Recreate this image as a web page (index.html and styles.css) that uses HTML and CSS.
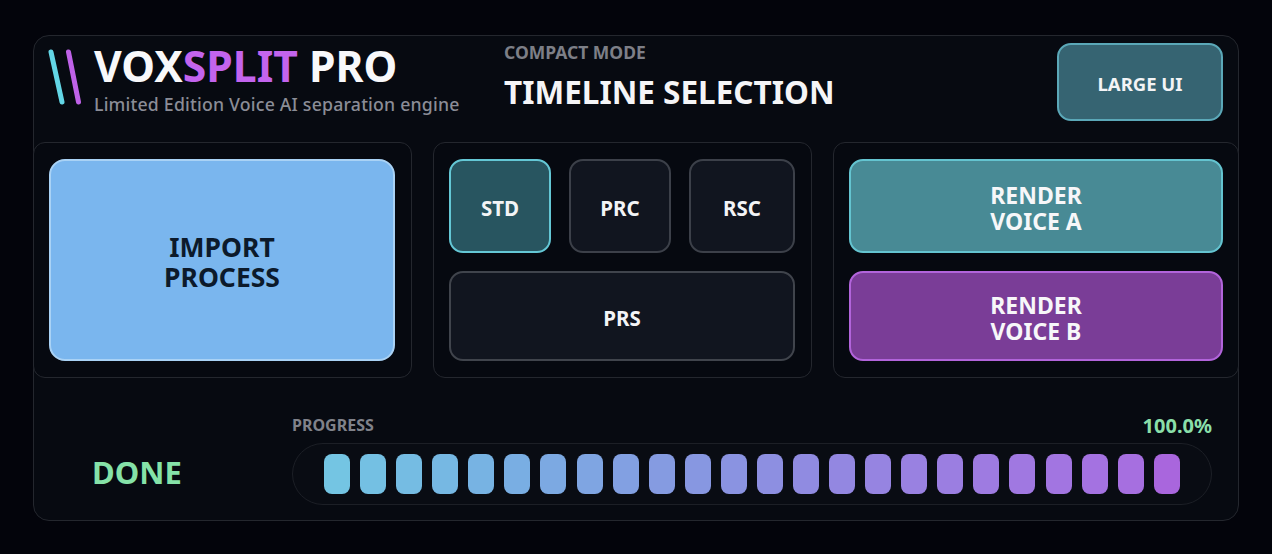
FILE: index.html
```html
<!DOCTYPE html>
<html lang="en">
<head>
<meta charset="utf-8">
<title>VoxSplit Pro</title>
<link rel="stylesheet" href="styles.css">
</head>
<body>
<main class="shell">
  <header class="top">
    <div class="brand">
      <svg class="logo" width="36" height="60" viewBox="0 0 36 60" aria-hidden="true">
        <line x1="3" y1="4" x2="14" y2="54" class="logo-a"/>
        <line x1="20.5" y1="4" x2="30.5" y2="54" class="logo-b"/>
      </svg>
      <div class="brand-text">
        <div class="title">VOX<span class="accent">SPLIT</span> PRO</div>
        <div class="subtitle">Limited Edition Voice AI separation engine</div>
      </div>
    </div>
    <div class="mode">
      <div class="mode-label">COMPACT MODE</div>
      <div class="mode-title">TIMELINE SELECTION</div>
    </div>
    <button class="btn large-ui">LARGE UI</button>
  </header>
  <section class="controls">
    <div class="card card-import">
      <button class="btn import">IMPORT<br>PROCESS</button>
    </div>
    <div class="card card-modes">
      <div class="mode-row">
        <button class="btn mode-btn std">STD</button>
        <button class="btn mode-btn prc">PRC</button>
        <button class="btn mode-btn rsc">RSC</button>
      </div>
      <button class="btn mode-btn prs">PRS</button>
    </div>
    <div class="card card-render">
      <button class="btn render voice-a">RENDER<br>VOICE A</button>
      <button class="btn render voice-b">RENDER<br>VOICE B</button>
    </div>
  </section>
  <footer class="bottom">
    <div class="status">DONE</div>
    <div class="progress">
      <div class="progress-head">
        <span class="progress-label">PROGRESS</span>
        <span class="progress-value">100.0%</span>
      </div>
      <div class="track">
        <i style="background:#74c5e3"></i><i style="background:#74c0e3"></i><i style="background:#75bce3"></i><i style="background:#76b8e3"></i>
        <i style="background:#77b3e3"></i><i style="background:#79aee3"></i><i style="background:#7ca9e2"></i><i style="background:#7fa5e2"></i>
        <i style="background:#82a0e2"></i><i style="background:#859be1"></i><i style="background:#8797e1"></i><i style="background:#8a93e1"></i>
        <i style="background:#8d8fe1"></i><i style="background:#908be1"></i><i style="background:#9387e1"></i><i style="background:#9684e1"></i>
        <i style="background:#9981e1"></i><i style="background:#9b7ee1"></i><i style="background:#9e7be1"></i><i style="background:#a078e1"></i>
        <i style="background:#a275e1"></i><i style="background:#a472e1"></i><i style="background:#a66fe0"></i><i style="background:#a966dd"></i>
      </div>
    </div>
  </footer>
</main>
</body>
</html>
```
FILE: styles.css
```css
* { box-sizing: border-box; }
html, body { margin: 0; height: 100%; }
body {
  background: #03040b;
  font-family: "Noto Sans", "DejaVu Sans", sans-serif;
  color: #f3f4f6;
  padding: 35px 33px 33px;
}
.shell {
  height: 486px;
  border: 1px solid #24272e;
  border-radius: 16px;
  background: #070a11;
  display: flex;
  flex-direction: column;
}
.top {
  height: 106px;
  display: flex;
  align-items: flex-start;
}
.brand { display: flex; margin: 12px 0 0 14px; width: 456px; }
.logo { flex: none; margin-right: 10px; }
.logo line { stroke-width: 5; stroke-linecap: round; }
.logo-a { stroke: #63d6e6; }
.logo-b { stroke: #bf62e8; }
.title {
  font-size: 42.7px;
  line-height: 36px;
  font-weight: 700;
  color: #f8f8fa;
  white-space: nowrap;
}
.accent { color: #c364ee; }
.subtitle {
  margin-top: 9px;
  font-size: 17.7px;
  line-height: 22px;
  font-weight: 500;
  color: #8b8d97;
  letter-spacing: .2px;
  white-space: nowrap;
}
.mode { margin-top: 5px; }
.mode-label {
  font-size: 17.5px;
  line-height: 22px;
  font-weight: 700;
  color: #7d7f87;
}
.mode-title {
  margin-top: 7px;
  font-size: 31.5px;
  line-height: 44px;
  font-weight: 700;
  color: #f5f5f7;
}
.btn {
  font-family: inherit;
  font-weight: 700;
  color: #f3f4f6;
  border: 2px solid #3c4049;
  border-radius: 14px;
  background: #11151f;
  padding: 4px 0 0;
  text-align: center;
}
.large-ui {
  margin: 7px 15px 0 auto;
  width: 166px;
  height: 78px;
  padding-top: 2px;
  font-size: 18.5px;
  background: #366472;
  border-color: #5ba8b8;
}
.controls {
  display: grid;
  grid-template-columns: 379px 379px 1fr;
  column-gap: 21px;
  height: 236px;
  margin: 0 -1px;
}
.card {
  border: 1px solid #24272e;
  border-radius: 12px;
  background: #060910;
  padding: 16px 16px 16px 15px;
}
.card-import { display: flex; }
.import {
  flex: 1;
  font-size: 26.5px;
  line-height: 30px;
  color: #0c1a2b;
  background: #7ab6ee;
  border-color: #a9d2f5;
  border-radius: 16px;
}
.card-modes, .card-render {
  display: flex;
  flex-direction: column;
  gap: 18px;
}
.card-render { padding-right: 15px; }
.mode-row { display: flex; gap: 18px; height: 94px; }
.mode-btn { font-size: 20.5px; }
.std { width: 102px; background: #285560; border-color: #64c7d5; }
.prc { width: 102px; }
.rsc { width: 106px; }
.prs { height: 90px; border-color: #40444c; }
.render {
  font-size: 23px;
  line-height: 26px;
  padding-top: 3px;
  color: #f7f7f9;
}
.voice-a { height: 94px; background: #488a95; border-color: #64c4d0; }
.voice-b { height: 90px; background: #7a3d97; border-color: #b264db; }
.bottom {
  flex: 1;
  display: flex;
  align-items: flex-start;
}
.status {
  width: 258px;
  margin-top: 74px;
  padding-left: 58px;
  font-size: 31px;
  line-height: 40px;
  font-weight: 700;
  color: #85e2a8;
}
.progress { width: 920px; margin-top: 35px; }
.progress-head {
  display: flex;
  justify-content: space-between;
  align-items: center;
  height: 24px;
}
.progress-label { font-size: 16px; font-weight: 700; color: #80828a; }
.progress-value { font-size: 20px; font-weight: 700; color: #8adfa9; }
.track {
  margin-top: 6px;
  height: 62px;
  border: 1px solid #1c1f26;
  border-radius: 31px;
  background: #090c13;
  padding: 0 31px;
  display: flex;
  justify-content: space-between;
  align-items: center;
}
.track i {
  display: block;
  width: 26px;
  height: 40px;
  border-radius: 8px;
}
```
